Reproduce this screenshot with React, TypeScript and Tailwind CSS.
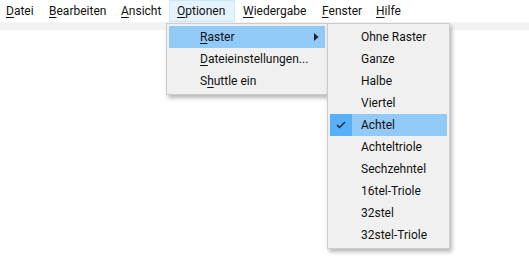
import React from "react";

const U = ({ children }: { children: React.ReactNode }) => (
  <span className="underline underline-offset-[2px]">{children}</span>
);

const bar: { u: string; rest: string; w: string; active?: boolean; first?: boolean }[] = [
  { u: "D", rest: "atei", w: "w-[41px]", first: true },
  { u: "B", rest: "earbeiten", w: "w-[72px]" },
  { u: "A", rest: "nsicht", w: "w-[56px]" },
  { u: "O", rest: "ptionen", w: "w-[66px]", active: true },
  { u: "W", rest: "iedergabe", w: "w-[79px]" },
  { u: "F", rest: "enster", w: "w-[54px]" },
  { u: "H", rest: "ilfe", w: "w-[41px]" },
];

const sub = [
  "Ohne Raster",
  "Ganze",
  "Halbe",
  "Viertel",
  "Achtel",
  "Achteltriole",
  "Sechzehntel",
  "16tel-Triole",
  "32stel",
  "32stel-Triole",
];

export default function App() {
  return (
    <div className="relative w-[529px] h-[280px] bg-white text-[12px] text-[#111] font-['Segoe_UI','Roboto',sans-serif] overflow-hidden">
      <div className="flex h-[22px]">
        {bar.map((b) => (
          <div
            key={b.u}
            className={
              "flex items-center h-full border " +
              b.w +
              " " +
              (b.first ? "pl-[5px] " : "pl-[7px] ") +
              (b.active ? "bg-[#e5f3ff] border-[#cce8ff]" : "border-transparent")
            }
          >
            <span className="whitespace-nowrap">
              <U>{b.u}</U>
              {b.rest}
            </span>
          </div>
        ))}
      </div>
      <div className="h-[8px] bg-[#f3f3f3]" />

      {/* Optionen menu */}
      <div className="absolute left-[166px] top-[23px] w-[162px] bg-[#f0f0f0] border border-[#cccccc] p-[2px] shadow-[2px_3px_4px_rgba(0,0,0,0.28)]">
        <div className="relative flex items-center h-[22px] bg-[#91c9f7] pl-[31px]">
          <span>
            <U>R</U>aster
          </span>
          <svg className="absolute left-[145px] top-[7px]" width="5" height="8" viewBox="0 0 5 8">
            <polygon points="0,0 4.5,4 0,8" fill="#222" />
          </svg>
        </div>
        <div className="flex items-center h-[22px] pl-[31px]">
          <span>
            <U>D</U>ateieinstellungen...
          </span>
        </div>
        <div className="flex items-center h-[22px] pl-[31px]">
          <span>
            S<U>h</U>uttle ein
          </span>
        </div>
      </div>

      {/* Raster submenu */}
      <div className="absolute left-[327px] top-[23px] w-[123px] bg-[#f0f0f0] border border-[#cccccc] p-[2px] shadow-[2px_3px_4px_rgba(0,0,0,0.28)]">
        {sub.map((s) => {
          const sel = s === "Achtel";
          return (
            <div
              key={s}
              className={"flex items-center h-[22px] " + (sel ? "bg-[#91c9f7]" : "")}
            >
              <div
                className={
                  "w-[22px] h-full flex items-center justify-center " + (sel ? "bg-[#56b0fa]" : "")
                }
              >
                {sel && (
                  <svg width="10" height="8" viewBox="0 0 10 8">
                    <polyline points="1,4 3.5,6.5 9,1" fill="none" stroke="#222" strokeWidth="1.3" />
                  </svg>
                )}
              </div>
              <span className="pl-[9px] whitespace-nowrap">{s}</span>
            </div>
          );
        })}
      </div>
    </div>
  );
}
